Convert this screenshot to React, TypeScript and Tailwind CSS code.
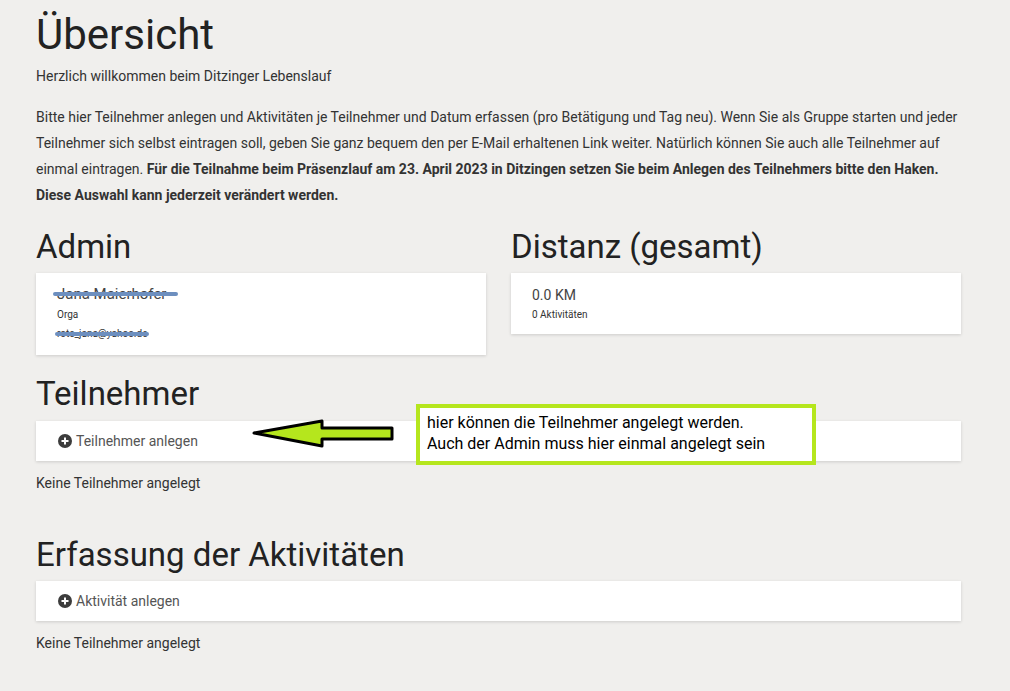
import React from 'react';

const Plus = () => (
    <svg width="14" height="14" viewBox="0 0 14 14">
        <circle cx="7" cy="7" r="7" fill="#3c3c3c" />
        <path d="M7 3.5v7M3.5 7h7" stroke="#fff" strokeWidth="2" />
    </svg>
);

const Card = ({ children, className = '' }: { children: React.ReactNode; className?: string }) => (
    <div className={`bg-white shadow-[0_1px_3px_rgba(0,0,0,0.15)] ${className}`}>{children}</div>
);

const serif = "font-[family-name:'Liberation_Serif',serif] text-[#222]";

const App = () => {
    return (
        <div className="min-h-[691px] bg-[#f0efed] text-[#333] font-[family-name:Roboto,sans-serif] relative">
            <div className="w-[925px] ml-[36px] pt-[12px]">
                <h1 className={`${serif} text-[42px] leading-[46px]`}>Übersicht</h1>
                <p className="text-[14px] mt-[8px] leading-[20px]">Herzlich willkommen beim Ditzinger Lebenslauf</p>
                <p className="text-[14px] leading-[26px] mt-[18px]">
                    Bitte hier Teilnehmer anlegen und Aktivitäten je Teilnehmer und Datum erfassen (pro Betätigung und Tag neu). Wenn Sie als Gruppe starten und jeder Teilnehmer sich selbst eintragen soll, geben Sie ganz bequem den per E-Mail erhaltenen Link weiter. Natürlich können Sie auch alle Teilnehmer auf einmal eintragen.{' '}
                    <b>Für die Teilnahme beim Präsenzlauf am 23. April 2023 in Ditzingen setzen Sie beim Anlegen des Teilnehmers bitte den Haken. Diese Auswahl kann jederzeit verändert werden.</b>
                </p>

                <div className="grid grid-cols-2 gap-[25px] mt-[20px]">
                    <div>
                        <h2 className={`${serif} text-[33px] leading-[38px]`}>Admin</h2>
                        <Card className="mt-[7px] h-[82px] px-[21px] pt-[12px]">
                            <div className="relative text-[15px] leading-[18px] text-[#444] w-fit">
                                Jana Maierhofer
                                <span className="absolute left-[-4px] right-[-12px] top-[7px] h-[4px] rounded bg-[#6d8fbf]" />
                            </div>
                            <div className="text-[10px] mt-[4px]">Orga</div>
                            <div className="relative text-[10px] mt-[4px] w-fit">
                                rote_jana@yahoo.de
                                <span className="absolute left-[-2px] right-[-2px] top-[6px] h-[4px] rounded bg-[#6d8fbf]" />
                            </div>
                        </Card>
                    </div>
                    <div>
                        <h2 className={`${serif} text-[33px] leading-[38px]`}>Distanz (gesamt)</h2>
                        <Card className="mt-[7px] h-[61px] px-[21px] pt-[13px]">
                            <div className="text-[14px] leading-[18px] text-[#444]">0.0 KM</div>
                            <div className="text-[10px] mt-[3px]">0 Aktivitäten</div>
                        </Card>
                    </div>
                </div>

                <h2 className={`${serif} text-[33px] leading-[38px] mt-[20px]`}>Teilnehmer</h2>
                <Card className="mt-[8px] h-[40px] px-[22px] flex items-center gap-[4px] text-[14px] text-[#555]">
                    <Plus /> Teilnehmer anlegen
                </Card>
                <p className="text-[14px] mt-[12px]">Keine Teilnehmer angelegt</p>

                <h2 className={`${serif} text-[33px] leading-[38px] mt-[42px]`}>Erfassung der Aktivitäten</h2>
                <Card className="mt-[7px] h-[40px] px-[22px] flex items-center gap-[4px] text-[14px] text-[#555]">
                    <Plus /> Aktivität anlegen
                </Card>
                <p className="text-[14px] mt-[12px]">Keine Teilnehmer angelegt</p>
            </div>

            <svg className="absolute left-[250px] top-[418px]" width="146" height="32" viewBox="0 0 146 32">
                <polygon points="4,15 72,3 72,10 142,10 142,21 72,21 72,28" fill="#b5e61d" stroke="#000" strokeWidth="3" strokeLinejoin="round" />
            </svg>
            <div className="absolute left-[416px] top-[404px] w-[400px] h-[61px] border-[4px] border-[#b5e61d] bg-white px-[7px] pt-[4px] text-[16px] leading-[21px] text-black font-[family-name:'Liberation_Sans',sans-serif]">
                hier können die Teilnehmer angelegt werden.<br />Auch der Admin muss hier einmal angelegt sein
            </div>
        </div>
    );
};

export default App;
